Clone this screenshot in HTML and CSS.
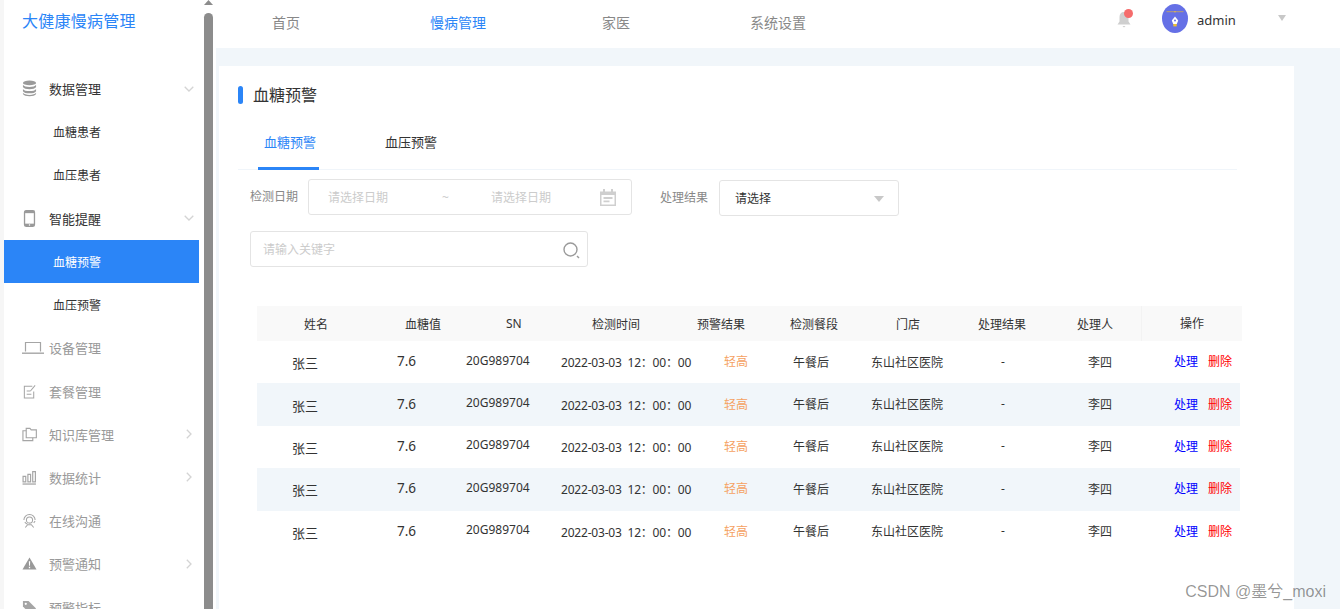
FILE: index.html
```html
<!DOCTYPE html>
<html lang="zh-CN">
<head>
<meta charset="utf-8">
<title>血糖预警</title>
<link rel="stylesheet" href="styles.css">
</head>
<body>
<div class="app">
  <aside class="side">
    <nav class="menu">
      <h1 class="brand">大健康慢病管理</h1>
      <a class="item dark">
        <svg class="ico" viewBox="0 0 16 18"><g fill="#9a9a9a"><ellipse cx="8" cy="3" rx="7" ry="2.6"/><path d="M1 5c1 1.6 3.600 2.300 7 2.300S14 6.600 15 5v2.400c-1 1.600-3.600 2.300-7 2.300S2 9 1 7.400z"/><path d="M1 9.400c1 1.600 3.600 2.300 7 2.300s6-.7 7-2.300v2.400c-1 1.600-3.600 2.300-7 2.300s-6-.7-7-2.300z"/><path d="M1 13.600c1 1.600 3.600 2.200 7 2.200s6-.6 7-2.200v1.200c-1 1.700-3.600 2.400-7 2.400s-6-.7-7-2.400z"/></g></svg>
        <span>数据管理</span>
        <svg class="chev-d" viewBox="0 0 10 6"><path d="M.7.7 5 5l4.300-4.300" fill="none" stroke="#d4d4d4" stroke-width="1.300"/></svg>
      </a>
      <a class="item sub">血糖患者</a>
      <a class="item sub">血压患者</a>
      <a class="item dark">
        <svg class="ico" viewBox="0 0 16 18"><rect x="2.700" y=".7" width="10.600" height="16.600" rx="1.800" fill="#fff" stroke="#9a9a9a" stroke-width="1.400"/><rect x="2.700" y=".7" width="10.600" height="2.600" fill="#9a9a9a"/><rect x="2.700" y="14.500" width="10.600" height="2.800" fill="#9a9a9a"/><circle cx="8" cy="15.900" r=".8" fill="#fff"/></svg>
        <span>智能提醒</span>
        <svg class="chev-d" viewBox="0 0 10 6"><path d="M.7.7 5 5l4.300-4.300" fill="none" stroke="#d4d4d4" stroke-width="1.300"/></svg>
      </a>
      <a class="item sub on">血糖预警</a>
      <a class="item sub">血压预警</a>
      <a class="item">
        <svg class="ico wide" viewBox="0 0 22 14"><path d="M3.500 10.500V1.500h15v9" fill="none" stroke="#a5a5a5" stroke-width="1.200"/><path d="M0 11.500h22v1.400H0z" fill="#a5a5a5"/></svg>
        <span>设备管理</span>
      </a>
      <a class="item">
        <svg class="ico" viewBox="0 0 16 16"><path d="M11 2.500H2.500v12.500h10V8M5 7.500h4M5 11h5" fill="none" stroke="#a5a5a5" stroke-width="1.100"/><path d="M9 7.500 14 1.500" stroke="#a5a5a5" stroke-width="1.100"/></svg>
        <span>套餐管理</span>
      </a>
      <a class="item">
        <svg class="ico" viewBox="0 0 16 15"><path d="M4.500 3.500H1v10.500h10.500V11" fill="none" stroke="#a5a5a5" stroke-width="1.200"/><path d="M4.500 1h4l1.300 1.600h5.500V11H4.500z" fill="none" stroke="#a5a5a5" stroke-width="1.200"/></svg>
        <span>知识库管理</span>
        <svg class="chev-r" viewBox="0 0 6 10"><path d="M.8.7 5 5 .8 9.300" fill="none" stroke="#d4d4d4" stroke-width="1.300"/></svg>
      </a>
      <a class="item">
        <svg class="ico" viewBox="0 0 14 14"><path d="M1 6h2.500v5H1zM5.500 4H8v7H5.500zM10 1.500h2.500V11H10z" fill="none" stroke="#a5a5a5" stroke-width="1.100"/><path d="M.500 12.500H13v1.200H.500z" fill="#a5a5a5"/></svg>
        <span>数据统计</span>
        <svg class="chev-r" viewBox="0 0 6 10"><path d="M.8.7 5 5 .8 9.300" fill="none" stroke="#d4d4d4" stroke-width="1.300"/></svg>
      </a>
      <a class="item">
        <svg class="ico" viewBox="0 0 16 16"><path d="M2 7.500a6 6 0 1 1 12 0M3 9.500a5.500 5.500 0 0 0 3 2.500" fill="none" stroke="#a5a5a5" stroke-width="1.100"/><circle cx="8" cy="7.500" r="3.300" fill="none" stroke="#a5a5a5" stroke-width="1.100"/><path d="M3.500 15.500 6 12.500h4l2.500 3M12.500 10.500l1.500-2" fill="none" stroke="#a5a5a5" stroke-width="1.100"/></svg>
        <span>在线沟通</span>
      </a>
      <a class="item">
        <svg class="ico" viewBox="0 0 16 14"><path d="M8 .5 15.500 13.500H.5z" fill="#999"/><path d="M7.300 4.500h1.400l-.2 5h-1zM7.300 10.500h1.400v1.500H7.300z" fill="#fff"/></svg>
        <span>预警通知</span>
        <svg class="chev-r" viewBox="0 0 6 10"><path d="M.8.7 5 5 .8 9.300" fill="none" stroke="#d4d4d4" stroke-width="1.300"/></svg>
      </a>
      <a class="item">
        <svg class="ico" viewBox="0 0 16 16"><path d="M1 1h6l8 8-6 6-8-8z" fill="#a5a5a5"/><circle cx="4" cy="4" r="1.200" fill="#fff"/></svg>
        <span>预警指标</span>
      </a>
    </nav>
    <div class="scroll">
      <svg class="scroll-up" viewBox="0 0 9 5"><path d="M4.500 0 9 5H0z" fill="#8c8c8c"/></svg>
      <div class="thumb"></div>
    </div>
  </aside>
  <div class="main">
    <header class="top">
      <nav class="topnav">
        <a class="nav-a">首页</a>
        <a class="nav-b cur">慢病管理</a>
        <a class="nav-c">家医</a>
        <a class="nav-d">系统设置</a>
      </nav>
      <div class="bell">
        <svg viewBox="0 0 16 19" width="16" height="19"><path d="M8 2c-3 0-4.500 2-4.500 5v4.500L1.500 14.500h13l-2-3V7C12.500 4 11 2 8 2z" fill="#cfcfcf"/><path d="M6.500 16h3L8 17.500z" fill="#cfcfcf"/></svg>
        <i class="dot"></i>
      </div>
      <div class="avatar">
        <svg viewBox="0 0 26 29" width="26" height="29"><path d="M4.500 7.700h17" stroke="#c9a75a" stroke-width=".8"/><circle cx="13" cy="7.700" r=".8" fill="#e8b94a"/><path d="M13 12.500l3.200 4-1.400 3.500h-3.600L9.800 16.500z" fill="#fff"/><circle cx="13" cy="16.500" r="1" fill="#6570e6"/><rect x="11.300" y="20" width="3.400" height="2.400" fill="#f2c230"/></svg>
      </div>
      <span class="user">admin</span>
      <svg class="user-caret" viewBox="0 0 8 6"><path d="M0 0h8L4 6z" fill="#c8c8c8"/></svg>
    </header>
    <section class="card">
      <h2 class="title">血糖预警</h2>
      <div class="tabs">
        <a class="tab active">血糖预警</a>
        <a class="tab">血压预警</a>
      </div>
      <div class="filters">
        <label class="lab">检测日期</label>
        <div class="box date">
          <span class="ph">请选择日期</span>
          <span class="tilde">~</span>
          <span class="ph">请选择日期</span>
          <svg class="cal" viewBox="0 0 16 17"><path d="M0 2.500h3V0h2v2.500h6V0h2v2.500h3V17H0z" fill="#cfcfcf"/><path d="M1.500 6h13v9.500h-13z" fill="#fff"/><path d="M3.500 8h9v2h-9zM3.500 11.500h6v1.700h-6z" fill="#cfcfcf"/></svg>
        </div>
        <label class="lab lab2">处理结果</label>
        <div class="box select">
          <span>请选择</span>
          <svg class="sel-caret" viewBox="0 0 10 6"><path d="M0 0h10L5 6z" fill="#c8c8c8"/></svg>
        </div>
      </div>
      <div class="box search">
        <span class="ph">请输入关键字</span>
        <svg class="mag" viewBox="0 0 17 17"><circle cx="7.500" cy="7.500" r="6.500" fill="none" stroke="#9a9a9a" stroke-width="1.400"/><path d="m14 14 2 2" stroke="#9a9a9a" stroke-width="1.400"/></svg>
      </div>
      <div class="table">
        <div class="head">
          <span>姓名</span><span>血糖值</span><span>SN</span><span>检测时间</span><span>预警结果</span><span>检测餐段</span><span>门店</span><span>处理结果</span><span>处理人</span><span class="fix">操作</span>
        </div>
        <div class="row">
          <span class="c-name">张三</span><span class="c-val">7.6</span><span class="c-sn">20G989704</span><span class="c-time">2022-03-03&nbsp; 12：00：00</span><span class="c-warn">轻高</span><span class="c-meal">午餐后</span><span class="c-shop">东山社区医院</span><span class="c-res">-</span><span class="c-man">李四</span><span class="c-act"><a class="go">处理</a><a class="del">删除</a></span>
        </div>
        <div class="row alt">
          <span class="c-name">张三</span><span class="c-val">7.6</span><span class="c-sn">20G989704</span><span class="c-time">2022-03-03&nbsp; 12：00：00</span><span class="c-warn">轻高</span><span class="c-meal">午餐后</span><span class="c-shop">东山社区医院</span><span class="c-res">-</span><span class="c-man">李四</span><span class="c-act"><a class="go">处理</a><a class="del">删除</a></span>
        </div>
        <div class="row">
          <span class="c-name">张三</span><span class="c-val">7.6</span><span class="c-sn">20G989704</span><span class="c-time">2022-03-03&nbsp; 12：00：00</span><span class="c-warn">轻高</span><span class="c-meal">午餐后</span><span class="c-shop">东山社区医院</span><span class="c-res">-</span><span class="c-man">李四</span><span class="c-act"><a class="go">处理</a><a class="del">删除</a></span>
        </div>
        <div class="row alt">
          <span class="c-name">张三</span><span class="c-val">7.6</span><span class="c-sn">20G989704</span><span class="c-time">2022-03-03&nbsp; 12：00：00</span><span class="c-warn">轻高</span><span class="c-meal">午餐后</span><span class="c-shop">东山社区医院</span><span class="c-res">-</span><span class="c-man">李四</span><span class="c-act"><a class="go">处理</a><a class="del">删除</a></span>
        </div>
        <div class="row">
          <span class="c-name">张三</span><span class="c-val">7.6</span><span class="c-sn">20G989704</span><span class="c-time">2022-03-03&nbsp; 12：00：00</span><span class="c-warn">轻高</span><span class="c-meal">午餐后</span><span class="c-shop">东山社区医院</span><span class="c-res">-</span><span class="c-man">李四</span><span class="c-act"><a class="go">处理</a><a class="del">删除</a></span>
        </div>
      </div>
    </section>
  </div>
</div>
<div class="mark">CSDN @墨兮_moxi</div>
</body>
</html>
```
FILE: styles.css
```css
* { box-sizing: border-box; }
html, body { margin: 0; height: 609px; overflow: hidden; background: #fff; }
body { font-family: "Noto Sans", "Noto Sans CJK SC", sans-serif; font-size: 12px; color: #333; position: relative; }
.app { display: flex; height: 609px; }

.side { width: 216px; flex: none; display: flex; background: #fff; border-left: 4px solid #f6f6f6; height: 609px; overflow: hidden; }
.menu { width: 200px; flex: none; }
.brand { margin: 0; height: 67.2px; padding: 9px 0 0 18px; font-size: 16px; line-height: 24px; font-weight: 400; color: #2b85f7; letter-spacing: .25px; }
.item { display: flex; align-items: center; width: 195px; height: 43.2px; padding: 0 5px 0 18px; font-size: 13px; color: #999; }
.item.dark { color: #333; }
.item .ico { width: 15px; height: 17px; margin-right: 12px; flex: none; }
.item .ico.wide { width: 22px; height: 14px; margin-right: 5px; }
.item.sub { padding-left: 49px; font-size: 12px; color: #333; }
.item.on { background: #2b85f7; color: #fff; }
.chev-d { width: 10px; height: 6px; margin-left: auto; }
.chev-r { width: 6px; height: 10px; margin-left: auto; margin-right: 2px; }
.scroll { width: 9px; flex: none; display: flex; flex-direction: column; align-items: center; }
.scroll-up { width: 9px; height: 5px; flex: none; }
.thumb { flex: 1; width: 9px; margin-top: 8px; background: #8c8c8c; border-radius: 5px 5px 0 0; }

.main { flex: 1; min-width: 0; display: flex; flex-direction: column; background: #f1f6fa; }
.top { height: 48px; flex: none; background: #fff; display: flex; align-items: center; padding-left: 56px; }
.topnav { display: flex; width: 844px; font-size: 14px; color: #888; margin-top: -5px; }
.nav-a { width: 158px; }
.nav-b { width: 172px; }
.nav-c { width: 148px; }
.cur { color: #2b85f7; }
.bell { position: relative; width: 16px; height: 19px; margin-top: -9px; }
.bell svg { display: block; }
.dot { position: absolute; top: -1px; right: -1px; width: 9px; height: 9px; border-radius: 50%; background: #f56c6c; }
.avatar { width: 26px; height: 29px; margin-left: 30px; margin-top: -11px; border-radius: 50%; background: #6570e6; }
.avatar svg { display: block; }
.user { margin-left: 9px; font-size: 13px; margin-top: -8px; }
.user-caret { width: 8px; height: 6px; margin-left: 42px; margin-top: -12px; }

.card { flex: 1; margin: 18px 46px 0 3px; background: #fff; padding: 20px 57px 0 19px; min-height: 0; }
.title { margin: 0; height: 18px; font-size: 16px; line-height: 18px; font-weight: 400; padding-left: 15px; position: relative; }
.title::before { content: ""; position: absolute; left: 0; top: 0; width: 5px; height: 18px; border-radius: 3px; background: #2b85f7; }
.tabs { display: flex; height: 48px; margin-top: 18px; border-bottom: 1px solid #f0f5fa; padding-left: 20px; }
.tab { width: 61px; height: 48px; padding: 10px 0 0 6px; font-size: 13px; line-height: 20px; margin-right: 60px; white-space: nowrap; }
.tab.active { color: #2b85f7; border-bottom: 3px solid #2b85f7; }

.filters { display: flex; align-items: flex-start; margin-top: 9px; padding-left: 12px; }
.lab { width: 58px; height: 36px; line-height: 36px; color: #888; }
.lab2 { width: 59px; margin-left: 28px; margin-top: 1px; }
.box { height: 36px; border: 1px solid #e4e4e4; border-radius: 3px; display: flex; align-items: center; background: #fff; }
.ph { color: #ccc; }
.date { width: 324px; padding-left: 19px; }
.tilde { color: #ccc; margin: 0 41px 0 53px; width: 9px; text-align: center; }
.cal { width: 16px; height: 17px; margin-left: auto; margin-right: 15px; }
.select { width: 180px; padding-left: 15px; margin-top: 1px; }
.sel-caret { width: 10px; height: 6px; margin-left: auto; margin-right: 14px; margin-top: 2px; }
.search { width: 338px; margin: 15px 0 0 12px; padding-left: 12px; }
.mag { width: 17px; height: 17px; margin-left: auto; margin-right: 7px; margin-top: 2px; }

.table { margin: 39px 0 0 19px; }
.head { width: 985px; height: 35px; background: #f9f9f9; display: grid; grid-template-columns: 101px 101px 86px 105px 93px 106px 82px 99px 64px 1fr; padding-left: 47px; align-items: center; }
.head .fix { height: 35px; line-height: 35px; padding-left: 38px; border-left: 1px solid #f3f3f3; }
.row { width: 983px; height: 42.4px; padding-bottom: 2px; display: grid; grid-template-columns: 105px 69px 95px 163px 69px 78px 130px 87px 86px 1fr; padding-left: 35px; align-items: center; white-space: nowrap; }
.row.alt { background: #f1f6fa; }
.c-name { font-size: 13px; padding-top: 3px; }
.c-val { font-size: 13.5px; }
.c-sn { padding-bottom: 2px; }
.c-time { padding-top: 2px; letter-spacing: -.2px; }
.c-warn { color: #f5a161; }
.c-meal, .c-shop, .c-man { padding-top: 1px; }
.c-act { display: flex; gap: 10px; }
.go { color: #00f; }
.del { color: #f00; }

.mark { position: absolute; right: 14px; top: 582px; font-size: 16px; line-height: 20px; color: rgba(0, 0, 0, .42); font-family: "Liberation Sans", "Noto Sans CJK SC", sans-serif; }
```
